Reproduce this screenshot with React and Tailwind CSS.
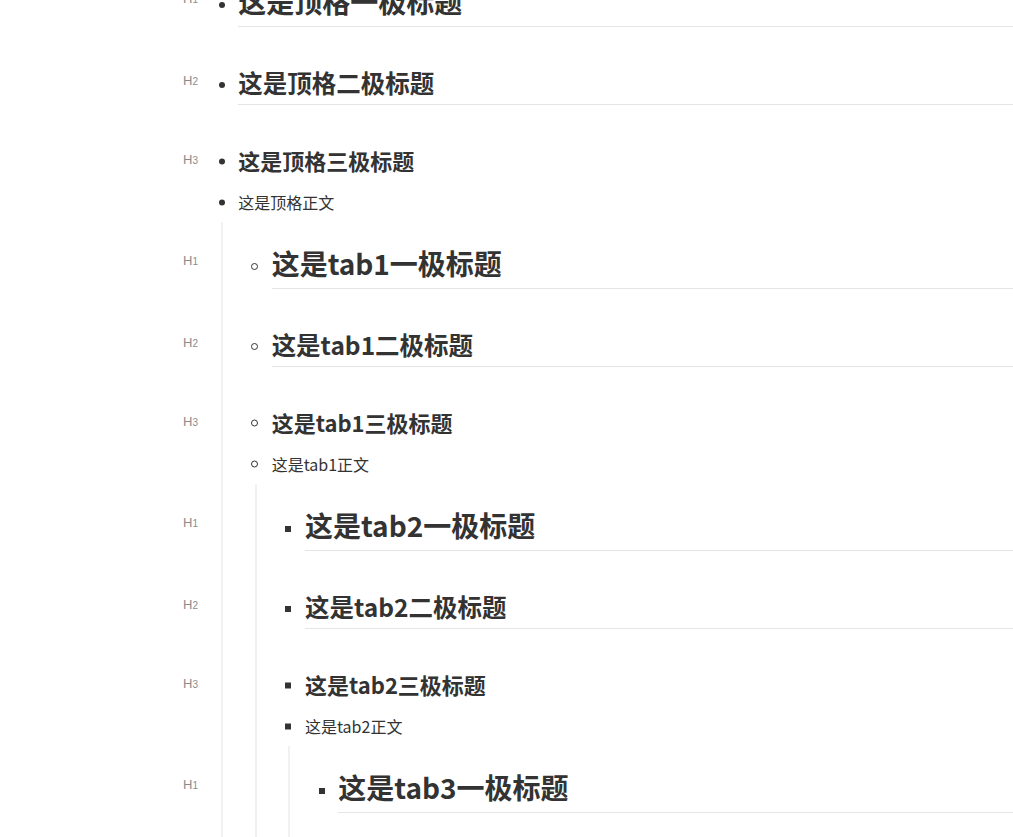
import React from "react";

const tree = (name, child) => [
  { t: "h1", text: `这是${name}一极标题` },
  { t: "h2", text: `这是${name}二极标题` },
  { t: "h3", text: `这是${name}三极标题` },
  { t: "p", text: `这是${name}正文`, children: child },
];

const data = tree("顶格", tree("tab1", tree("tab2", tree("tab3", null))));

const rowCls = {
  h1: "mt-[24px]",
  h2: "mt-[41px]",
  h3: "mt-[42px]",
  p: "mt-[17px]",
};
const textCls = {
  h1: "text-[28px] leading-[34px] font-bold border-b border-[#e5e5e5] pb-[8px]",
  h2: "text-[24.5px] leading-[30px] font-bold border-b border-[#e5e5e5] pb-[6px]",
  h3: "text-[22px] leading-[26px] font-bold",
  p: "text-[16px] leading-[24px] font-normal",
};
const lineH = {
  h1: "h-[34px]",
  h2: "h-[30px]",
  h3: "h-[26px]",
  p: "h-[24px]",
};
const bulletShift = {
  h1: "translate-y-[4px]",
  h2: "translate-y-[2px]",
  h3: "translate-y-[1.5px]",
  p: "translate-y-[0.5px]",
};
const labelCls = {
  h1: "mt-[7px]",
  h2: "mt-[5px]",
  h3: "mt-[5px]",
};

function Bullet({ depth, t }) {
  if (depth === 0) return <span className={`block w-[6px] h-[6px] rounded-full bg-[#333] ${bulletShift[t]}`} />;
  if (depth === 1)
    return <span className={`block w-[7px] h-[7px] rounded-full border border-[#333] ${bulletShift[t]}`} />;
  return <span className={`block w-[6px] h-[6px] bg-[#333] ${bulletShift[t]}`} />;
}

function Row({ item, depth, first }) {
  const label = item.t !== "p" ? item.t.slice(1) : null;
  return (
    <div className={first && depth === 0 ? "" : rowCls[item.t]}>
      {label && (
        <span
          className={`absolute left-[183px] ${labelCls[item.t]} text-[13px] leading-[16px] text-[#8c8c8c] font-['Liberation_Sans',sans-serif]`}
        >
          H<span className="text-[10px]">{label}</span>
        </span>
      )}
      <div className="flex items-start">
        <div className={`w-[33.5px] shrink-0 flex items-center justify-center ${lineH[item.t]}`}>
          <Bullet depth={depth} t={item.t} />
        </div>
        <div className={`flex-1 min-w-0 ${textCls[item.t]}`}>{item.text}</div>
      </div>
    </div>
  );
}

function List({ items, depth }) {
  return (
    <div className="flex flex-col">
      {items.map((item, i) => (
        <React.Fragment key={i}>
          <Row item={item} depth={depth} first={i === 0} />
          {item.children && (
            <div className="flex flex-col mt-[8px] ml-[16.5px] border-l-2 border-[#f1f1f1] pl-[14.83px] pb-[40px]">
              <List items={item.children} depth={depth + 1} />
            </div>
          )}
        </React.Fragment>
      ))}
    </div>
  );
}

export default function App() {
  return (
    <div
      className="relative h-[837px] w-full overflow-hidden bg-white text-[#333]"
      style={{ fontFamily: "'Noto Sans CJK SC', 'Noto Sans', sans-serif" }}
    >
      <div className="flex flex-col pl-[204.8px] -mt-[16.5px]">
        <List items={data} depth={0} />
      </div>
    </div>
  );
}
